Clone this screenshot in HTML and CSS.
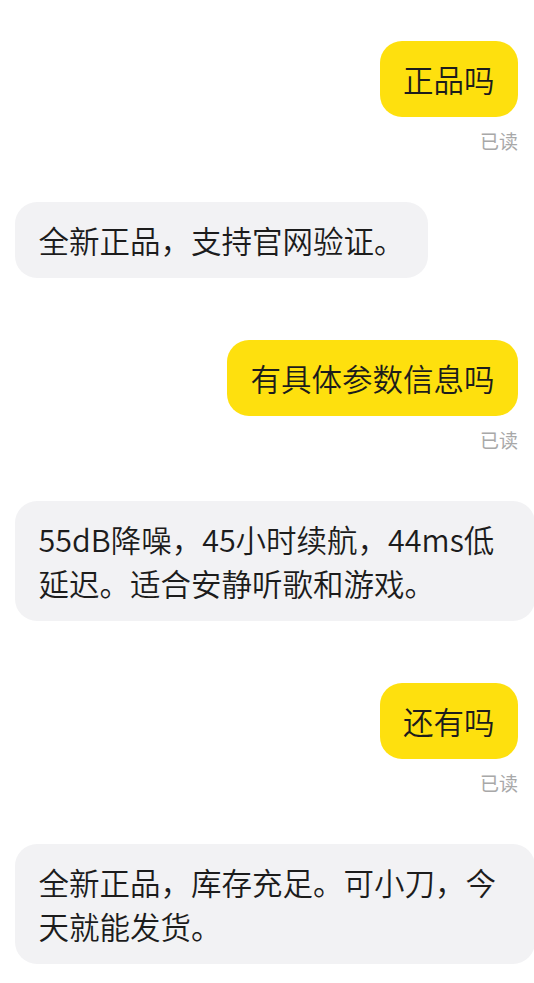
FILE: index.html
```html
<!DOCTYPE html>
<html lang="zh-CN">
<head>
<meta charset="utf-8">
<title>聊天</title>
<link rel="stylesheet" href="styles.css">
</head>
<body>
<main class="chat">
  <div class="msg msg-out">
    <div class="bubble bubble-out">正品吗</div>
    <div class="receipt">已读</div>
  </div>
  <div class="msg msg-in">
    <div class="bubble bubble-in">全新正品，支持官网验证。</div>
  </div>
  <div class="msg msg-out">
    <div class="bubble bubble-out">有具体参数信息吗</div>
    <div class="receipt">已读</div>
  </div>
  <div class="msg msg-in">
    <div class="bubble bubble-in">55dB降噪，45小时续航，44ms低延迟。适合安静听歌和游戏。</div>
  </div>
  <div class="msg msg-out">
    <div class="bubble bubble-out">还有吗</div>
    <div class="receipt">已读</div>
  </div>
  <div class="msg msg-in">
    <div class="bubble bubble-in">全新正品，库存充足。可小刀，今天就能发货。</div>
  </div>
</main>
</body>
</html>
```

FILE: styles.css
```css
html, body {
  margin: 0;
  padding: 0;
  background: #ffffff;
}

body {
  font-family: "Noto Sans CJK SC", "Noto Sans", sans-serif;
  color: #1c1c1c;
  overflow: hidden;
}

.chat {
  display: flex;
  flex-direction: column;
  padding: 41px 16px 0 15px;
}

.msg {
  display: flex;
  flex-direction: column;
}

.msg-out {
  align-items: flex-end;
  margin-bottom: 50px;
}

.msg-in {
  align-items: flex-start;
  margin-bottom: 62px;
}

.bubble {
  font-size: 30.5px;
  font-weight: 350;
  line-height: 44px;
  padding: 16px 23.5px;
  border-radius: 22px;
  box-sizing: border-box;
}

.bubble-out {
  background: #fee00e;
}

.bubble-in {
  background: #f2f2f4;
  max-width: 520px;
  margin-right: -28px;
}

.receipt {
  margin-top: 13px;
  font-size: 19px;
  line-height: 22px;
  color: #a8a8a8;
}
```
